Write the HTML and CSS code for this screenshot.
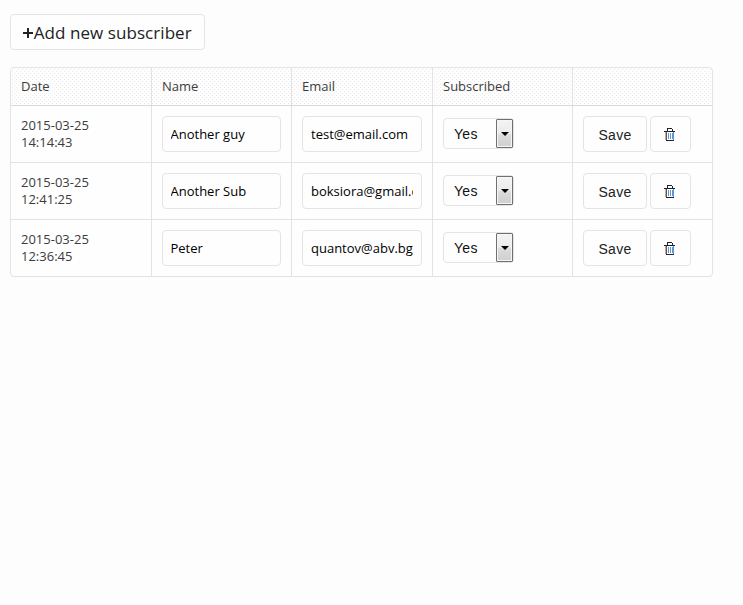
FILE: index.html
```
<!DOCTYPE html>
<html lang="en">
<head>
<meta charset="utf-8">
<title>Subscribers</title>
<link rel="stylesheet" href="styles.css">
</head>
<body>
<svg class="defs" aria-hidden="true">
  <symbol id="trash" viewBox="0 0 12 13" shape-rendering="crispEdges">
    <path d="M3 0h5v1H3zM3 1h1v2H3zM8 1h1v2H8zM0 3h11v1H0zM2 12h8v1H2z" fill="#222"/>
    <path d="M1 4h1v8H1z" fill="#d9a878"/>
    <path d="M2 4h1v8H2z" fill="#4a5a70"/>
    <path d="M9 4h1v8H9zM4 5h1v6H4zM6 5h1v6H6zM8 5h1v6H8z" fill="#5f95d6"/>
  </symbol>
</svg>
<button class="add"><svg class="plus" viewBox="0 0 10 10"><path d="M4 0h2v4h4v2H6v4H4V6H0V4h4z" fill="#222"/></svg><span>Add new subscriber</span></button>
<div class="table">
  <div class="row head"><div>Date</div><div>Name</div><div>Email</div><div>Subscribed</div><div></div></div>
  <div class="row">
    <div class="date">2015-03-25 14:14:43</div>
    <div><input value="Another guy"></div>
    <div><input class="email" value="test@email.com"></div>
    <div><span class="select">Yes<i class="arrow"></i></span></div>
    <div class="actions"><button class="save">Save</button><button class="del"><svg><use href="#trash"/></svg></button></div>
  </div>
  <div class="row">
    <div class="date">2015-03-25 12:41:25</div>
    <div><input value="Another Sub"></div>
    <div><input class="email" value="boksiora@gmail.com"></div>
    <div><span class="select">Yes<i class="arrow"></i></span></div>
    <div class="actions"><button class="save">Save</button><button class="del"><svg><use href="#trash"/></svg></button></div>
  </div>
  <div class="row">
    <div class="date">2015-03-25 12:36:45</div>
    <div><input value="Peter"></div>
    <div><input class="email" value="quantov@abv.bg"></div>
    <div><span class="select">Yes<i class="arrow"></i></span></div>
    <div class="actions"><button class="save">Save</button><button class="del"><svg><use href="#trash"/></svg></button></div>
  </div>
</div>
</body>
</html>
```
FILE: styles.css
```
* { box-sizing: border-box; }
body {
  margin: 0;
  padding: 14px 10px;
  background: #fdfdfd;
  color: #3c3c3c;
  font: 13px/17px "Open Sans", sans-serif;
}
.defs { display: none; }
button, input, .select {
  border: 1px solid #e4e4e4;
  border-radius: 4px;
  background: #fefefe;
}
button { padding: 0; color: #222; }
.add {
  display: flex;
  align-items: center;
  width: 195px;
  height: 36px;
  padding: 2px 0 0 12px;
  margin-bottom: 17px;
  font: 17px/24px "Open Sans", sans-serif;
  letter-spacing: .06px;
  white-space: nowrap;
}
.plus { width: 10px; height: 10px; flex: none; margin-right: .8px; }
.table {
  width: 703px;
  border: 1px solid #e3e3e3;
  border-radius: 4px;
  background: #fefefe;
}
.row {
  display: grid;
  grid-template-columns: 141px 140px 141px 140px 139px;
  height: 57px;
  border-bottom: 1px solid #e3e3e3;
}
.row:last-child { height: 56px; border-bottom: 0; }
.row > div {
  display: flex;
  align-items: center;
  min-width: 0;
  padding: 0 10px;
  border-right: 1px solid #e3e3e3;
}
.row > div:last-child { border-right: 0; }
.row.head {
  height: 38px;
  border-bottom-color: #dadada;
  background-image:
    conic-gradient(from 270deg at 1px 1px, #ebebeb 90deg, transparent 0),
    conic-gradient(from 270deg at 1px 1px, #ebebeb 90deg, transparent 0);
  background-size: 4px 4px;
  background-position: 1px 3px, 3px 5px;
}
.row > .date { padding-right: 50px; }
input {
  width: 100%;
  height: 36px;
  padding: 0 7.5px;
  color: #000;
  font: 13px/17px "Open Sans", sans-serif;
}
.email { padding: 0 8px; }
.select {
  display: flex;
  align-items: center;
  justify-content: space-between;
  width: 71px;
  height: 31px;
  margin-bottom: 1px;
  padding-left: 10px;
  color: #111;
  font: 14px/16px "Liberation Sans", sans-serif;
  letter-spacing: .3px;
}
.arrow {
  display: flex;
  align-items: center;
  justify-content: center;
  width: 17px;
  height: 29px;
  border: 1px solid #707070;
  border-radius: 1px;
  background: linear-gradient(#f3f3f3, #ebebeb 50%, #dddddd 50%, #cfcfcf);
  box-shadow: inset 0 0 0 1px #f6f6f6;
}
.arrow::before {
  content: "";
  border: 4px solid transparent;
  border-top-color: #000;
  border-bottom: 0;
}
.actions { gap: 3px; }
.save {
  width: 64px;
  height: 36px;
  padding-top: 2px;
  font: 14px/16px "Liberation Sans", sans-serif;
  letter-spacing: .3px;
}
.del {
  display: flex;
  align-items: center;
  justify-content: center;
  width: 41px;
  height: 36px;
  padding: 1px 1px 0 0;
}
.del svg { width: 12px; height: 13px; }
```
